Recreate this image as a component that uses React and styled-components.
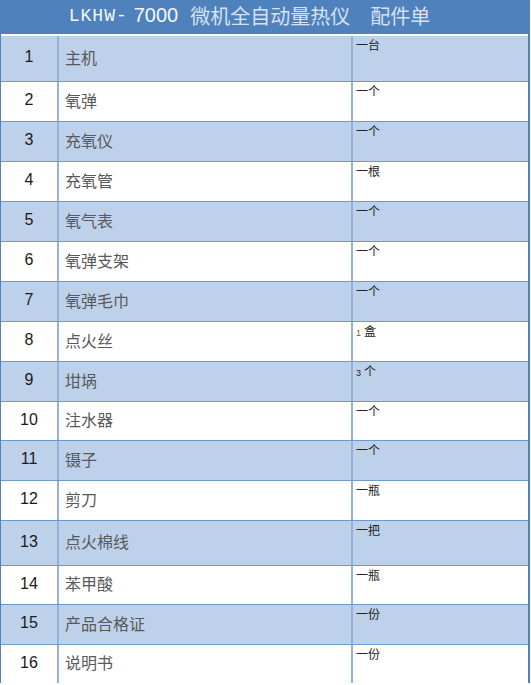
import React from "react";
import styled, { createGlobalStyle } from "styled-components";

const GlobalStyle = createGlobalStyle`
  html, body {
    margin: 0;
    padding: 0;
    background: #ffffff;
  }
`;

const Sheet = styled.div`
  width: 530px;
  border-left: 1px solid #4f81bd;
  border-right: 2px solid #4f81bd;
  box-sizing: border-box;
`;

const Header = styled.div`
  height: 36px;
  background: #4f81bd;
  display: flex;
  align-items: center;
  justify-content: center;
  padding: 0 30px 3px 0;
  box-sizing: border-box;
  border-bottom: 2px solid #ffffff;
  color: #e6edf7;
`;

const Model = styled.span`
  font-family: "Liberation Mono", monospace;
  font-size: 18px;
  letter-spacing: 1px;
  color: #f4f7fb;
  margin-right: 6px;
`;

const Digits = styled.span`
  font-family: "Liberation Sans", sans-serif;
  font-size: 20px;
  color: #f4f7fb;
  margin-right: 12px;
`;

const Title = styled.span`
  font-family: "Noto Sans CJK SC", sans-serif;
  font-size: 20px;
  color: #d6e2f1;
`;

const Row = styled.div`
  display: grid;
  grid-template-columns: 58px 294px 1fr;
  height: ${(p) => p.$h}px;
  box-sizing: border-box;
  background: ${(p) => (p.$band ? "#bed1ea" : "#ffffff")};
  border-top: ${(p) => (p.$first ? "none" : "1px solid #6f98cc")};
`;

const Cell = styled.div`
  box-sizing: border-box;
  border-right: ${(p) => (p.$last ? "none" : "2px solid #93b1da")};
`;

const Num = styled(Cell)`
  display: flex;
  align-items: center;
  justify-content: center;
  padding-bottom: 3px;
  font-family: "Liberation Sans", sans-serif;
  font-size: 16px;
  color: #1a1a1a;
`;

const Name = styled(Cell)`
  display: flex;
  align-items: center;
  padding: 0 0 4px 6px;
  font-family: "Noto Sans CJK SC", sans-serif;
  font-size: 16px;
  color: #595959;
`;

const Qty = styled(Cell)`
  padding: 1px 0 0 3px;
  font-family: "Noto Sans CJK SC", sans-serif;
  font-size: 12px;
  line-height: 16px;
  color: #222222;
`;

const Small = styled.span`
  font-family: "Liberation Sans", sans-serif;
  font-size: 9px;
  margin-right: 3px;
  color: ${(p) => p.$tone || "#222222"};
`;

const items = [
  ["主机", "一台", 45],
  ["氧弹", "一个", 40],
  ["充氧仪", "一个", 40],
  ["充氧管", "一根", 40],
  ["氧气表", "一个", 40],
  ["氧弹支架", "一个", 40],
  ["氧弹毛巾", "一个", 40],
  ["点火丝", ["1", "盒", "#8a5a20"], 40],
  ["坩埚", ["3", "个"], 40],
  ["注水器", "一个", 39],
  ["镊子", "一个", 40],
  ["剪刀", "一瓶", 40],
  ["点火棉线", "一把", 45],
  ["苯甲酸", "一瓶", 39],
  ["产品合格证", "一份", 40],
  ["说明书", "一份", 39],
];

export default function App() {
  return (
    <>
      <GlobalStyle />
      <Sheet>
        <Header>
          <Model>LKHW-</Model>
          <Digits>7000</Digits>
          <Title>微机全自动量热仪　配件单</Title>
        </Header>
        {items.map(([name, qty, h], i) => (
          <Row key={i} $h={h} $band={i % 2 === 0} $first={i === 0}>
            <Num>{i + 1}</Num>
            <Name>{name}</Name>
            <Qty $last>
              {Array.isArray(qty) ? (
                <>
                  <Small $tone={qty[2]}>{qty[0]}</Small>
                  {qty[1]}
                </>
              ) : (
                qty
              )}
            </Qty>
          </Row>
        ))}
      </Sheet>
    </>
  );
}
